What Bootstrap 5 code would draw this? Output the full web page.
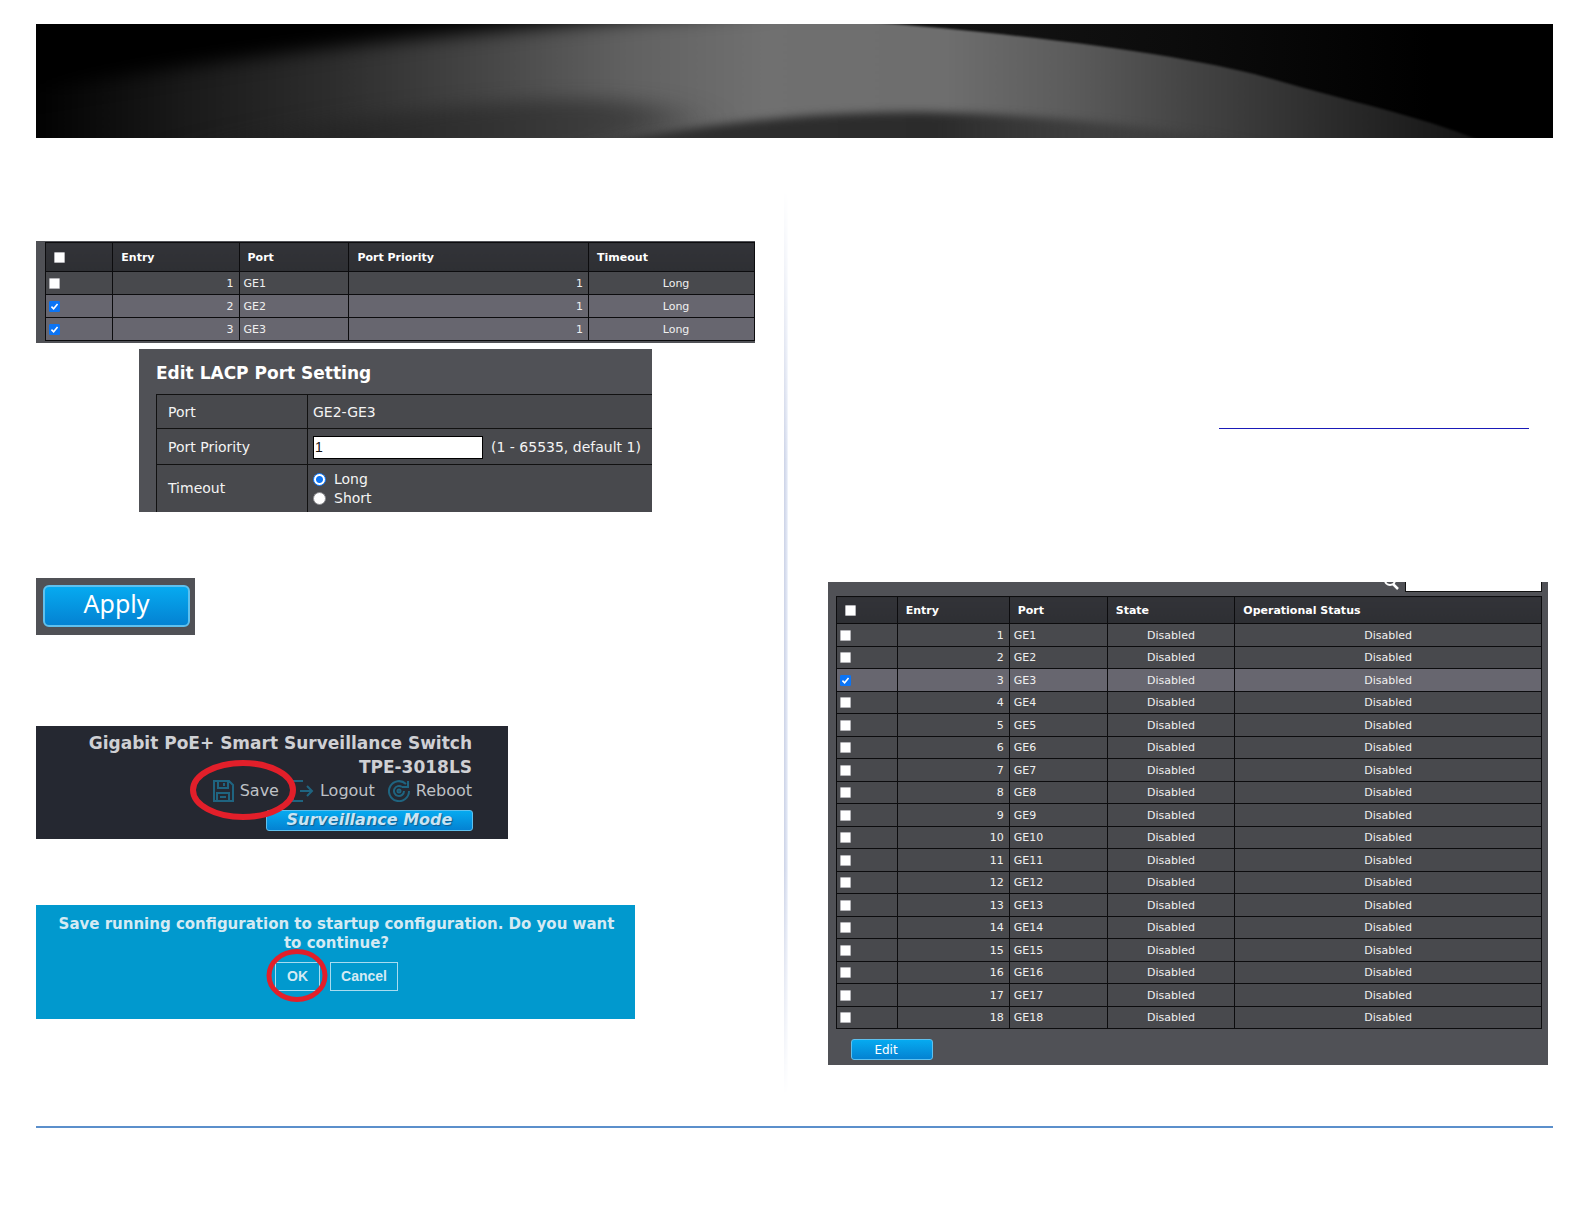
<!DOCTYPE html>
<html lang="en">
<head>
<meta charset="utf-8">
<meta name="viewport" content="width=device-width, initial-scale=1">
<title>LACP Port Setting</title>
<link href="https://cdn.jsdelivr.net/npm/bootstrap@5.3.0/dist/css/bootstrap.min.css" rel="stylesheet">
<style>
  body { font-family: "DejaVu Sans", Verdana, sans-serif; background: #fff; font-size: 11px; }
  .page-wrap { padding: 24px 31px 96px 36px; }
  .banner { height: 114px; background: #000; overflow: hidden; }
  .columns { display: grid; grid-template-columns: 719fr 73px 720fr; padding: 0 5px 61px 0; }
  .col-left { padding-top: 103px; }
  .divider { width: 4px; margin: 52px 0 -30px 29px;
    background: linear-gradient(to right, #ccd3e6, #dde3f2 60%, #f4f7fc); 
    -webkit-mask-image: linear-gradient(to bottom, transparent, #000 30%, #000 75%, transparent);
    mask-image: linear-gradient(to bottom, transparent, #000 30%, #000 75%, transparent); }
  .foot-line { height: 2px; background: #5b8fcb; }
  .panel { background: #505156; color: #f4f4f4; }

  /* port grids */
  .port-table { width: 100%; table-layout: fixed; border-collapse: collapse; line-height: 14px; color: #f0f0f0; }
  .port-table th, .port-table td { border: 1px solid #0c0c0e; padding: 1px 5px 0 4px; height: 23px; vertical-align: middle; }
  .port-table th { background: linear-gradient(#323338, #2e2f33); color: #fff; padding-left: 8px; height: 29px; }
  .port-table td { background: #48494d; }
  .port-table .picked td { background: #67666f; }
  .port-table td:nth-child(2) { text-align: right; }
  .port-table td:first-child { padding: 0 0 0 3px; }
  .tick { appearance: none; display: block; width: 11px; height: 11px; margin: 0; background: #fff; border: 1px solid #b4b4b8; border-radius: 1px; }
  .tick:checked { border-color: #0b74f5; background: #0b74f5 url("data:image/svg+xml,%3Csvg xmlns='http://www.w3.org/2000/svg' viewBox='0 0 10 10'%3E%3Cpath d='M1.6 5.2 4 7.5 8.4 2.3' fill='none' stroke='white' stroke-width='1.8'/%3E%3C/svg%3E") center/9px no-repeat; }
  .lacp-ports { padding: 1px 0 2px 9px; }
  .lacp-ports td:nth-child(4) { text-align: right; }
  .lacp-ports td:nth-child(5) { text-align: center; padding-left: 14px; }

  /* edit form */
  .edit-panel { width: 513px; margin: 6px 0 0 103px; padding: 12px 0 0 17px; font-size: 14px; line-height: 19px; }
  .edit-panel h2 { font-size: 17px; line-height: 24px; font-weight: bold; margin: 0 0 9px; color: #fff; }
  .form-grid { width: 100%; border-collapse: collapse; background: #48494d; }
  .form-grid th, .form-grid td { border: 1px solid #111; border-right: 0; padding: 1px 5px 0; font-weight: normal; height: 34px; white-space: nowrap; }
  .form-grid th { width: 151px; padding-left: 11px; }
  .form-grid tr:nth-child(2) > * { height: 36px; }
  .form-grid tr:nth-child(3) > * { height: 47px; border-bottom: 0; }
  .prio { width: 170px; height: 23px; border: 1px solid #000; background: #fff; padding: 0 1px; font: 14px/19px "Liberation Sans", Arial, sans-serif; color: #111; }
  .dot { appearance: none; width: 13px; height: 13px; margin: 0; border-radius: 50%; background: #fff; border: 1px solid #8b8b8f; }
  .dot:checked { background: radial-gradient(circle, #0b74f5 0 3px, #fff 4px 5px); border: 1px solid #0b74f5; }

  /* blue buttons */
  .blue-btn { background: linear-gradient(#06aaf0, #0482d2); border: 1px solid #5fc0ee; color: #fff; border-radius: 3px; padding: 0; }
  .apply-panel { width: 159px; height: 57px; margin-top: 66px; padding: 7px 5px 8px 7px; }
  .apply-btn { display: block; width: 100%; height: 42px; padding-bottom: 5px; border-width: 2px; border-radius: 6px; font: 25px/32px "Noto Sans", sans-serif; }

  /* switch header */
  .switch-panel { position: relative; width: 472px; height: 113px; margin-top: 91px; padding: 5px 36px 0 0; background: #252831; color: #cfd0d4; text-align: right; }
  .switch-title { font-size: 17px; line-height: 24px; font-weight: bold; white-space: nowrap; }
  .switch-links { gap: 13px; height: 25px; }
  .switch-links a { color: #bfc1c6; text-decoration: none; font-size: 16px; line-height: 24px; display: flex; align-items: center; gap: 6px; }
  .switch-links svg { width: 22px; height: 22px; fill: none; stroke: #1f6480; stroke-width: 2; }
  .mode-btn { display: block; width: 207px; height: 21px; margin: 6px -1px 0 auto; color: #c9e4f4; font: italic bold 16px/18px "DejaVu Sans", Verdana, sans-serif; text-shadow: 1px 1px 1px #135b8c; }
  .ring { position: absolute; fill: none; stroke: #e21f2a; overflow: visible; pointer-events: none; }
  .ring-save { left: 153px; top: 34px; width: 108px; height: 60px; stroke-width: 6; }

  /* confirm box */
  .confirm-panel { width: 599px; height: 114px; margin-top: 66px; padding: 10px 10px 0 12px; background: #0199ce; color: #d5eaf3; text-align: center; font-size: 15px; line-height: 19px; font-weight: bold; }
  .confirm-panel p { margin: 0 0 9px; }
  .confirm-panel button { height: 29px; border: 1px solid #a8dcf0; background: none; color: #d5eaf3; font: bold 14px/20px "Liberation Sans", Arial, sans-serif; padding: 0; }
  .confirm-choices { gap: 10px; }
  .ok-wrap { position: relative; display: flex; }
  .ok-btn { width: 45px; }
  .cancel-btn { width: 68px; }
  .ring-ok { left: -9px; top: -13px; width: 62px; height: 53px; stroke-width: 5; }

  /* right column */
  .link-line { display: block; width: 310px; height: 1px; margin: 290px 19px 0 auto; background: #1a1ab8; }
  .lag-panel { margin-top: 153px; padding: 0 6px 5px 8px; }
  .find-bar { height: 14px; gap: 6px; overflow: hidden; align-items: flex-start; }
  .find-bar svg { width: 16px; height: 10px; fill: none; stroke: #fff; stroke-width: 2; }
  .find-box { width: 137px; height: 10px; border: 1px solid #111; border-top: 0; background: #fff; padding: 0; }
  .lag-ports th { height: 27px; }
  .lag-ports tr:nth-child(even) td { height: 22px; }
  .port-table.lag-ports td:nth-child(n+4) { text-align: center; padding: 1px 0 0; }
  .edit-btn { width: 82px; height: 21px; margin: 10px 0 0 15px; padding-right: 12px; font-size: 12px; line-height: 18px; display: block; }
</style>
<script src="https://cdn.jsdelivr.net/npm/bootstrap@5.3.0/dist/js/bootstrap.bundle.min.js"></script>
</head>
<body>
<div class="page-wrap">
  <header class="banner">
    <svg class="d-block w-100 h-100" viewBox="0 0 1517 114" preserveAspectRatio="none" color-interpolation-filters="sRGB" aria-hidden="true">
      <defs>
        <linearGradient id="sky"><stop offset="0" stop-color="#000"/><stop offset=".55" stop-color="#161616"/><stop offset=".75" stop-color="#0c0c0c"/><stop offset=".92" stop-color="#000"/></linearGradient>
        <linearGradient id="glow" gradientUnits="userSpaceOnUse" x1="0" x2="1517" y1="0" y2="0">
          <stop offset="0" stop-color="#020202"/><stop offset=".1" stop-color="#1a1a1a"/><stop offset=".2" stop-color="#2e2e2e"/><stop offset=".3" stop-color="#474747"/><stop offset=".39" stop-color="#616161"/><stop offset=".48" stop-color="#707070"/><stop offset=".6" stop-color="#6e6e6e"/><stop offset=".68" stop-color="#5c5c5c"/><stop offset=".76" stop-color="#444"/><stop offset=".86" stop-color="#2a2a2a"/><stop offset=".95" stop-color="#141414"/>
        </linearGradient>
        <linearGradient id="low" gradientUnits="userSpaceOnUse" x1="560" x2="1250" y1="0" y2="0"><stop offset="0" stop-color="#303030"/><stop offset=".5" stop-color="#2b2b2b"/><stop offset="1" stop-color="#2b2b2b" stop-opacity="0"/></linearGradient>
        <filter id="b1" x="-10%" y="-50%" width="120%" height="200%"><feGaussianBlur stdDeviation="1"/></filter>
        <filter id="b5" x="-10%" y="-50%" width="120%" height="200%"><feGaussianBlur stdDeviation="9 4"/></filter>
        <filter id="b12" x="-20%" y="-60%" width="140%" height="220%"><feGaussianBlur stdDeviation="30 9"/></filter>
      </defs>
      <rect width="1517" height="114" fill="url(#sky)"/>
      <path d="M-20 130V-10H720C980 6 1160 32 1240 56S1400 94 1475 130Z" fill="url(#glow)" filter="url(#b1)"/>
      <path d="M-60 75Q200 32 380 14T700 -12V-50H-60Z" fill="#000" filter="url(#b12)"/>
      <path d="M150 130Q300 90 470 78T640 100L560 130Z" fill="#1e1e1e" fill-opacity=".5" filter="url(#b12)"/>
      <path d="M540 124Q720 88 880 88Q1050 90 1250 124Z" fill="url(#low)" filter="url(#b5)"/>
    </svg>
  </header>

  <main class="columns">
    <section class="col-left">
      <div class="panel lacp-ports">
        <table class="port-table">
          <colgroup><col style="width:9.5%"><col style="width:17.8%"><col style="width:15.5%"><col style="width:33.8%"><col style="width:23.4%"></colgroup>
          <thead><tr><th><input class="tick" type="checkbox" aria-label="Select all ports"></th><th>Entry</th><th>Port</th><th>Port Priority</th><th>Timeout</th></tr></thead>
          <tbody>
            <tr><td><input class="tick" type="checkbox" aria-label="GE1"></td><td>1</td><td>GE1</td><td>1</td><td>Long</td></tr>
            <tr class="picked"><td><input class="tick" type="checkbox" checked aria-label="GE2"></td><td>2</td><td>GE2</td><td>1</td><td>Long</td></tr>
            <tr class="picked"><td><input class="tick" type="checkbox" checked aria-label="GE3"></td><td>3</td><td>GE3</td><td>1</td><td>Long</td></tr>
          </tbody>
        </table>
      </div>

      <form class="panel edit-panel">
        <h2>Edit LACP Port Setting</h2>
        <table class="form-grid">
          <tr><th>Port</th><td>GE2-GE3</td></tr>
          <tr><th><label for="prio">Port Priority</label></th><td><div class="d-flex align-items-center gap-2"><input class="prio" id="prio" type="text" value="1"><span>(1 - 65535, default 1)</span></div></td></tr>
          <tr><th>Timeout</th><td>
            <label class="d-flex align-items-center gap-2"><input class="dot" type="radio" name="timeout" checked>Long</label>
            <label class="d-flex align-items-center gap-2"><input class="dot" type="radio" name="timeout">Short</label>
          </td></tr>
        </table>
      </form>

      <div class="panel apply-panel"><button class="blue-btn apply-btn" type="button">Apply</button></div>

      <div class="switch-panel">
        <div class="switch-title">Gigabit PoE+ Smart Surveillance Switch</div>
        <div class="switch-title">TPE-3018LS</div>
        <nav class="switch-links d-flex justify-content-end align-items-center">
          <a href="#"><svg viewBox="0 0 22 22" aria-hidden="true"><path d="M2 1h15l4 4v16H2zM6 1v7h10V1M5 21v-8h12v8M8 17h6M12 3v3"/></svg>Save</a>
          <a href="#"><svg viewBox="0 0 22 22" aria-hidden="true"><path d="M11 1H1v20h10M8 11h12M15 6l5 5-5 5"/></svg>Logout</a>
          <a href="#"><svg viewBox="0 0 22 22" aria-hidden="true"><path d="M18 4A10 10 0 1 0 21 11M20 1v6h-6M14 7a5 5 0 1 0 2 4"/><circle cx="11" cy="11" r="1.5"/></svg>Reboot</a>
        </nav>
        <button class="blue-btn mode-btn" type="button">Surveillance Mode</button>
        <svg class="ring ring-save" viewBox="0 0 108 60" aria-hidden="true"><ellipse cx="54" cy="30" rx="50" ry="27"/></svg>
      </div>

      <div class="confirm-panel">
        <p>Save running configuration to startup configuration. Do you want<br>to continue?</p>
        <div class="confirm-choices d-flex justify-content-center">
          <div class="ok-wrap"><button class="ok-btn" type="button">OK</button>
            <svg class="ring ring-ok" viewBox="0 0 62 53" preserveAspectRatio="none" aria-hidden="true"><ellipse cx="31" cy="26.5" rx="28" ry="24"/></svg></div>
          <button class="cancel-btn" type="button">Cancel</button>
        </div>
      </div>
    </section>

    <div class="divider"></div>

    <section>
      <a class="link-line" href="#" aria-label="Support page"></a>
      <div class="panel lag-panel">
        <div class="find-bar d-flex justify-content-end">
          <svg viewBox="0 0 16 10" aria-hidden="true"><circle cx="7" cy="-2" r="5"/><path d="M10 2l5 5" stroke-width="2.5"/></svg>
          <input class="find-box" type="text" aria-label="Search">
        </div>
        <table class="port-table lag-ports">
          <colgroup><col style="width:8.6%"><col style="width:15.9%"><col style="width:13.9%"><col style="width:18.1%"><col style="width:43.5%"></colgroup>
          <thead><tr><th><input class="tick" type="checkbox" aria-label="Select all"></th><th>Entry</th><th>Port</th><th>State</th><th>Operational Status</th></tr></thead>
          <tbody id="lag-rows"></tbody>
        </table>
        <button class="blue-btn edit-btn" type="button">Edit</button>
      </div>
    </section>
  </main>
  <div class="foot-line"></div>
</div>
<script>
  const body = document.getElementById('lag-rows');
  for (let n = 1; n <= 18; n++) {
    const on = n === 3;
    body.insertAdjacentHTML('beforeend',
      `<tr${on ? ' class="picked"' : ''}><td><input class="tick" type="checkbox" aria-label="Select GE${n}"${on ? ' checked' : ''}></td><td>${n}</td><td>GE${n}</td><td>Disabled</td><td>Disabled</td></tr>`);
  }
</script>
</body>
</html>
